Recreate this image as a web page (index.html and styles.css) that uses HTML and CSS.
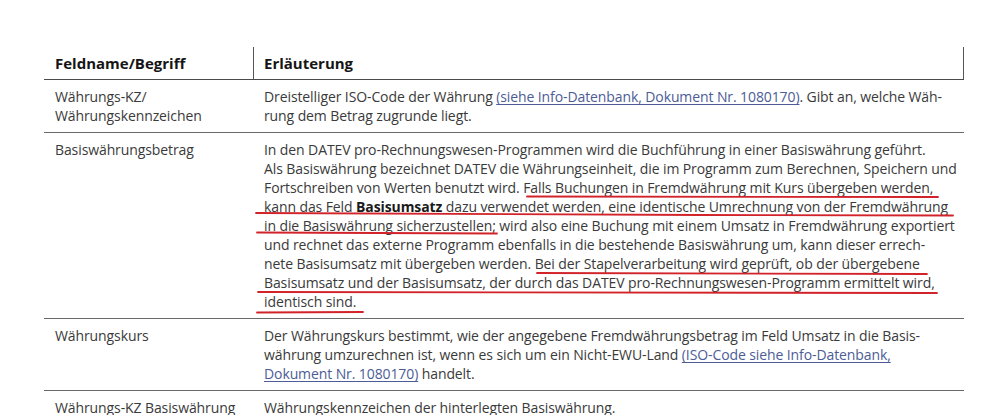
FILE: index.html
```html
<!DOCTYPE html>
<html lang="de">
<head>
<meta charset="utf-8">
<title>Feldbeschreibung</title>
<link rel="stylesheet" href="styles.css">
</head>
<body>
<div class="page">
  <div class="table">
    <div class="row head">
      <div class="cell c1">Feldname/Begriff</div>
      <div class="cell c2">Erläuterung</div>
    </div>
    <div class="row">
      <div class="cell c1">Währungs-KZ/<br>Währungskennzeichen</div>
      <div class="cell c2">Dreistelliger ISO-Code der Währung <a href="#">(siehe Info-Datenbank, Dokument Nr. 1080170)</a>. Gibt an, welche Wäh-<br>rung dem Betrag zugrunde liegt.</div>
    </div>
    <div class="row">
      <div class="cell c1">Basiswährungsbetrag</div>
      <div class="cell c2">In den DATEV pro-Rechnungswesen-Programmen wird die Buchführung in einer Basiswährung geführt.<br>Als Basiswährung bezeichnet DATEV die Währungseinheit, die im Programm zum Berechnen, Speichern und<br>Fortschreiben von Werten benutzt wird. Falls Buchungen in Fremdwährung mit Kurs übergeben werden,<br>kann das Feld <b>Basisumsatz</b> dazu verwendet werden, eine identische Umrechnung von der Fremdwährung<br>in die Basiswährung sicherzustellen; wird also eine Buchung mit einem Umsatz in Fremdwährung exportiert<br>und rechnet das externe Programm ebenfalls in die bestehende Basiswährung um, kann dieser errech-<br>nete Basisumsatz mit übergeben werden. Bei der Stapelverarbeitung wird geprüft, ob der übergebene<br>Basisumsatz und der Basisumsatz, der durch das DATEV pro-Rechnungswesen-Programm ermittelt wird,<br>identisch sind.</div>
    </div>
    <div class="row">
      <div class="cell c1">Währungskurs</div>
      <div class="cell c2">Der Währungskurs bestimmt, wie der angegebene Fremdwährungsbetrag im Feld Umsatz in die Basis-<br>währung umzurechnen ist, wenn es sich um ein Nicht-EWU-Land <a href="#">(ISO-Code siehe Info-Datenbank,<br>Dokument Nr. 1080170)</a> handelt.</div>
    </div>
    <div class="row">
      <div class="cell c1">Währungs-KZ Basiswährung</div>
      <div class="cell c2">Währungskennzeichen der hinterlegten Basiswährung.</div>
    </div>
  </div>
  <svg class="marks" width="999" height="415" viewBox="0 0 999 415" aria-hidden="true">
    <g fill="none" stroke="#d2232a" stroke-width="1.8" stroke-linecap="round">
      <path d="M527 196.5 L938 197"/>
      <path d="M256 213 L700 215 L953 215.5"/>
      <path d="M257 232.5 L497 233.5"/>
      <path d="M537 273 L927 274"/>
      <path d="M258 292 L937 293"/>
      <path d="M257 312.5 L363 312"/>
    </g>
  </svg>
</div>
</body>
</html>
```

FILE: styles.css
```css
html, body {
  margin: 0;
  padding: 0;
  background: #ffffff;
}

.page {
  position: relative;
  width: 999px;
  height: 415px;
  overflow: hidden;
  padding: 47px 0 0 44px;
  box-sizing: border-box;
  font-family: "Open Sans", "Noto Sans", "Liberation Sans", sans-serif;
  color: #3a3a3a;
}

.table {
  width: 920px;
}

.row {
  display: grid;
  grid-template-columns: 209px 1fr;
  border-bottom: 1.5px solid #6a6a6a;
}

.cell {
  padding: 7px 11px 7px 11px;
  font-size: 14px;
  line-height: 19px;
  white-space: nowrap;
  letter-spacing: -0.1px;
}

.head {
  border-bottom: 1.6px solid #4a4a4a;
}

.head .cell {
  font-size: 15px;
  font-weight: 700;
  color: #151515;
  line-height: 20px;
  padding-top: 6px;
  padding-bottom: 6px;
  letter-spacing: 0;
}

.head .c2 {
  border-left: 1.5px solid #555;
  border-right: 1.5px solid #555;
  padding-left: 10px;
}

.c2 b {
  font-weight: 700;
  color: #1a1a1a;
}

.c2 a {
  color: #4d5c96;
  text-decoration: underline;
  text-decoration-thickness: 1px;
  text-underline-offset: 2px;
}

.marks {
  position: absolute;
  left: 0;
  top: 0;
  pointer-events: none;
}
```
